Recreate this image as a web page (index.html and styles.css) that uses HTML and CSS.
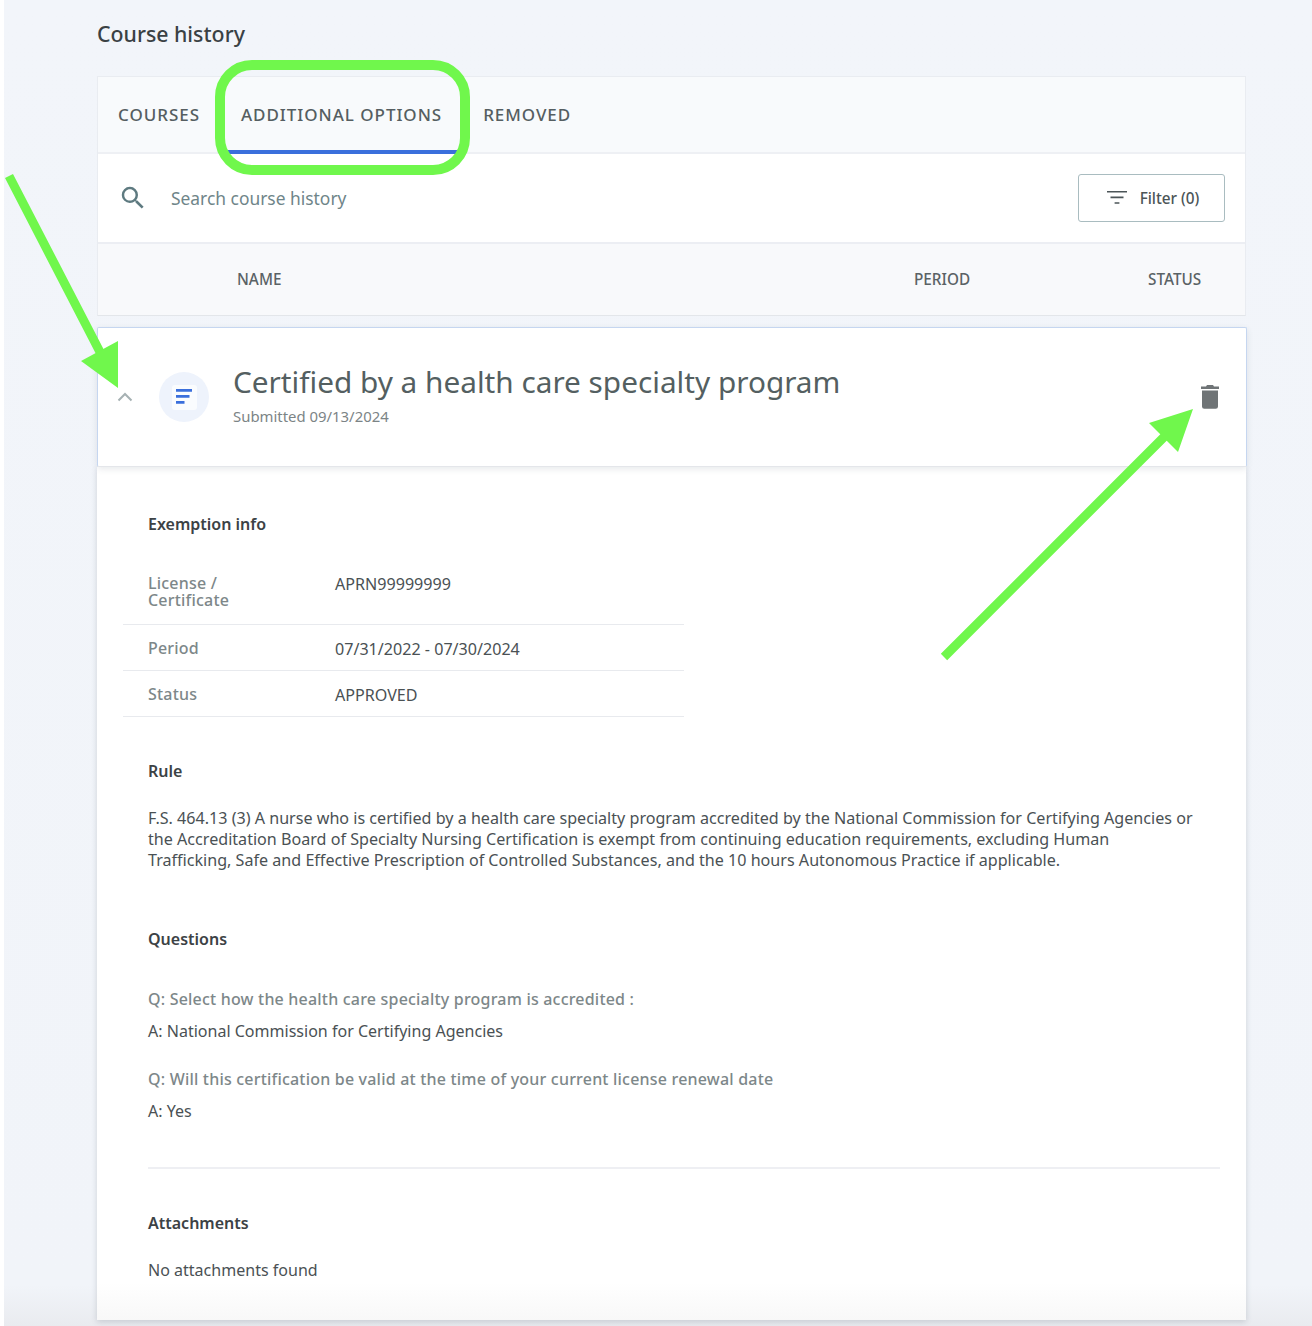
FILE: index.html
```html
<!DOCTYPE html>
<html lang="en">
<head>
<meta charset="utf-8">
<title>Course history</title>
<link rel="stylesheet" href="styles.css">
</head>
<body>
<main class="page">
  <h1 class="title">Course history</h1>
  <section class="panel">
    <nav class="tabs">
      <span class="tab">COURSES</span>
      <span class="tab tab-active">ADDITIONAL OPTIONS</span>
      <span class="tab">REMOVED</span>
    </nav>
    <div class="search">
      <svg class="search-icon" viewBox="0 0 24 24"><path d="M15.5 14h-.79l-.28-.27A6.47 6.47 0 0 0 16 9.5 6.5 6.5 0 1 0 9.5 16c1.61 0 3.09-.59 4.23-1.57l.27.28v.79l5 4.99L20.49 19l-4.99-5zm-6 0C7.01 14 5 11.99 5 9.5S7.01 5 9.5 5 14 7.01 14 9.5 11.99 14 9.5 14z"/></svg>
      <span class="search-text">Search course history</span>
      <button class="filter">
        <svg class="filter-icon" viewBox="0 0 20 14"><path d="M0 0h20v1.6H0zM3.5 5.6h13v1.6h-13zM7.6 11.2h4.8v1.6H7.6z"/></svg>
        <span>Filter (0)</span>
      </button>
    </div>
    <div class="columns">
      <span class="col-name">NAME</span>
      <span class="col-period">PERIOD</span>
      <span class="col-status">STATUS</span>
    </div>
  </section>

  <section class="item">
    <svg class="chevron" viewBox="0 0 16 10"><path d="M1.5 8.5 8 2l6.500 6.500" /></svg>
    <span class="doc-badge">
      <span class="doc-inner">
        <svg class="doc-icon" viewBox="0 0 16 16"><path d="M0 0h16v2.700H0zM0 6h13.500v2.700H0zM0 12h8.500v2.700H0z"/></svg>
      </span>
    </span>
    <div class="item-text">
      <h2 class="item-title">Certified by a health care specialty program</h2>
      <p class="item-sub">Submitted 09/13/2024</p>
    </div>
    <svg class="trash" viewBox="0 0 18 24"><path d="M6 0h6l1 1.500h5v2.500H0V1.500h5zM1 5.500h16V21.500a2.300 2.300 0 0 1-2.300 2.300H3.300A2.300 2.300 0 0 1 1 21.500z"/></svg>
  </section>

  <section class="details">
    <h3 class="heading">Exemption info</h3>
    <div class="info">
      <div class="row row-license"><span class="label">License /<br>Certificate</span><span class="value">APRN99999999</span></div>
      <div class="row"><span class="label">Period</span><span class="value">07/31/2022 - 07/30/2024</span></div>
      <div class="row"><span class="label">Status</span><span class="value">APPROVED</span></div>
    </div>
    <h3 class="heading heading-rule">Rule</h3>
    <p class="rule">F.S. 464.13 (3) A nurse who is certified by a health care specialty program accredited by the National Commission for Certifying Agencies or<br>the Accreditation Board of Specialty Nursing Certification is exempt from continuing education requirements, excluding Human<br>Trafficking, Safe and Effective Prescription of Controlled Substances, and the 10 hours Autonomous Practice if applicable.</p>
    <h3 class="heading heading-questions">Questions</h3>
    <p class="q q-first">Q: Select how the health care specialty program is accredited :</p>
    <p class="a">A: National Commission for Certifying Agencies</p>
    <p class="q q-next">Q: Will this certification be valid at the time of your current license renewal date</p>
    <p class="a">A: Yes</p>
    <hr class="divider">
    <h3 class="heading heading-attach">Attachments</h3>
    <p class="none">No attachments found</p>
  </section>
</main>

<svg class="annotations" viewBox="0 0 1312 1326" width="1312" height="1326">
  <rect class="ring" x="220" y="65" width="245" height="105" rx="32"/>
  <path class="arrow" d="M9 176 100 352M944 657 1165 436"/>
  <path class="arrow-head" d="M118 341V388L81 361ZM1193 409 1178 452 1149 423Z"/>
</svg>
</body>
</html>
```
FILE: styles.css
```css
* { box-sizing: border-box; }
html, body { margin: 0; padding: 0; }
body {
  width: 1312px;
  height: 1326px;
  overflow: hidden;
  position: relative;
  background: #ffffff;
  font-family: "Noto Sans", "Open Sans", sans-serif;
  color: #4c5558;
}
.page {
  margin-left: 4px;
  height: 1326px;
  padding: 19px 66px 0 93px;
  background: linear-gradient(#f2f5fa 0, #f1f4f9 1285px, #e9ebef 1326px);
  overflow: hidden;
}
.title {
  margin: 0;
  font-size: 21.300px;
  line-height: 30px;
  font-weight: 500;
  color: #3a4144;
  height: 57px;
}
.panel {
  background: #ffffff;
  border: 1px solid #e9ecf1;
  border-bottom-color: #e3e6ea;
  width: 1149px;
}
.tabs {
  display: flex;
  height: 77px;
  gap: 1px;
  background: #f8fafc;
  border-bottom: 2px solid #eef0f4;
}
.tab {
  height: 75px;
  padding: 26px 20px 0;
  font-size: 17px;
  line-height: 24px;
  font-weight: 500;
  letter-spacing: .96px;
  color: #555e61;
}
.tab-active {
  height: 77px;
  border-bottom: 4px solid #3a6fdc;
}
.search {
  display: flex;
  align-items: center;
  height: 90px;
  padding: 0 20px 0 20px;
  border-bottom: 2px solid #eceef3;
}
.search-icon {
  width: 30px;
  height: 30px;
  fill: #5e7a80;
}
.search-text {
  flex: 1;
  margin-left: 23px;
  font-size: 17.400px;
  color: #6f8589;
}
.filter {
  display: flex;
  align-items: center;
  justify-content: center;
  gap: 13px;
  width: 147px;
  height: 48px;
  padding: 0 0 0 3px;
  background: #ffffff;
  border: 1px solid #a9bcc0;
  border-radius: 3px;
  font-family: inherit;
  font-size: 15.300px;
  font-weight: 500;
  color: #4c5558;
}
.filter-icon {
  width: 20px;
  height: 14px;
  fill: #4c5558;
}
.columns {
  display: flex;
  align-items: center;
  height: 71px;
  padding-bottom: 2px;
  background: #f8f9fb;
  font-size: 15.300px;
  font-weight: 500;
  color: #5a6265;
}
.col-name { margin-left: 139px; width: 677px; }
.col-period { width: 234px; }
.item {
  display: flex;
  align-items: center;
  width: 1150px;
  height: 140px;
  margin-top: 11px;
  padding: 0 27px 0 19px;
  background: #ffffff;
  border: 1px solid #c5d6f0;
  border-bottom-color: #e4e6ea;
  border-radius: 2px;
  box-shadow: 0 2px 6px rgba(60, 70, 90, .12);
  position: relative;
}
.chevron {
  width: 16px;
  height: 10px;
  fill: none;
  stroke: #a6b1b3;
  stroke-width: 2;
}
.doc-badge {
  display: flex;
  align-items: center;
  justify-content: center;
  width: 50px;
  height: 50px;
  margin-left: 26px;
  border-radius: 50%;
  background: #eef3fc;
}
.doc-inner {
  display: flex;
  align-items: center;
  justify-content: center;
  width: 25px;
  height: 25px;
  border-radius: 3px;
  background: #fafcfe;
}
.doc-icon {
  width: 16px;
  height: 16px;
  fill: #3a6fdc;
}
.item-text {
  flex: 1;
  margin-left: 24px;
  padding-bottom: 6px;
}
.item-title {
  margin: 0;
  font-size: 29.750px;
  line-height: 40px;
  font-weight: 400;
  color: #545f61;
}
.item-sub {
  margin: 4px 0 0;
  font-size: 14.900px;
  line-height: 20px;
  color: #7c8486;
}
.trash {
  width: 18px;
  height: 24px;
  fill: #6f7476;
}
.details {
  width: 1149px;
  height: 853px;
  padding: 47px 26px 0 51px;
  background: linear-gradient(#ffffff 0, #ffffff 816px, #f8f8f8 853px);
  box-shadow: 0 2px 6px rgba(60, 70, 90, .2);
}
.heading {
  margin: 0;
  font-size: 16px;
  line-height: 20px;
  font-weight: 600;
  color: #3c4245;
}
.info {
  width: 561px;
  margin: 41px 0 0 -25px;
}
.row {
  display: flex;
  align-items: flex-start;
  height: 46px;
  padding: 15px 0 0 25px;
  border-bottom: 1px solid #e8eaee;
  font-size: 16.100px;
  line-height: 17px;
}
.row-license {
  height: 50px;
  padding-top: 0;
}
.label {
  width: 187px;
  font-size: 16px;
  letter-spacing: .2px;
  font-weight: 500;
  color: #7d8789;
}
.value {
  color: #4a5154;
  padding-top: 1px;
}
.heading-rule { margin-top: 44px; }
.rule {
  margin: 27px 0 0;
  font-size: 16.130px;
  line-height: 21px;
  color: #4a5154;
  white-space: nowrap;
}
.heading-questions { margin-top: 58px; }
.q {
  margin: 0;
  font-size: 16px;
  line-height: 20px;
  font-weight: 500;
  letter-spacing: .2px;
  color: #7d8789;
}
.q-first { margin-top: 40px; }
.q-next { margin-top: 27px; }
.a {
  margin: 12px 0 0;
  font-size: 16.050px;
  line-height: 21px;
  color: #4a5154;
}
.divider {
  margin: 45px 0 0;
  border: 0;
  height: 2px;
  width: 1072px;
  background: #eeeff3;
}
.heading-attach { margin-top: 44px; }
.none {
  margin: 27px 0 0;
  font-size: 16.050px;
  line-height: 21px;
  color: #4a5154;
}
.annotations {
  position: absolute;
  left: 0;
  top: 0;
  pointer-events: none;
}
.ring {
  fill: none;
  stroke: #70f74c;
  stroke-width: 10;
}
.arrow {
  fill: none;
  stroke: #70f74c;
  stroke-width: 9;
}
.arrow-head { fill: #70f74c; }
```
